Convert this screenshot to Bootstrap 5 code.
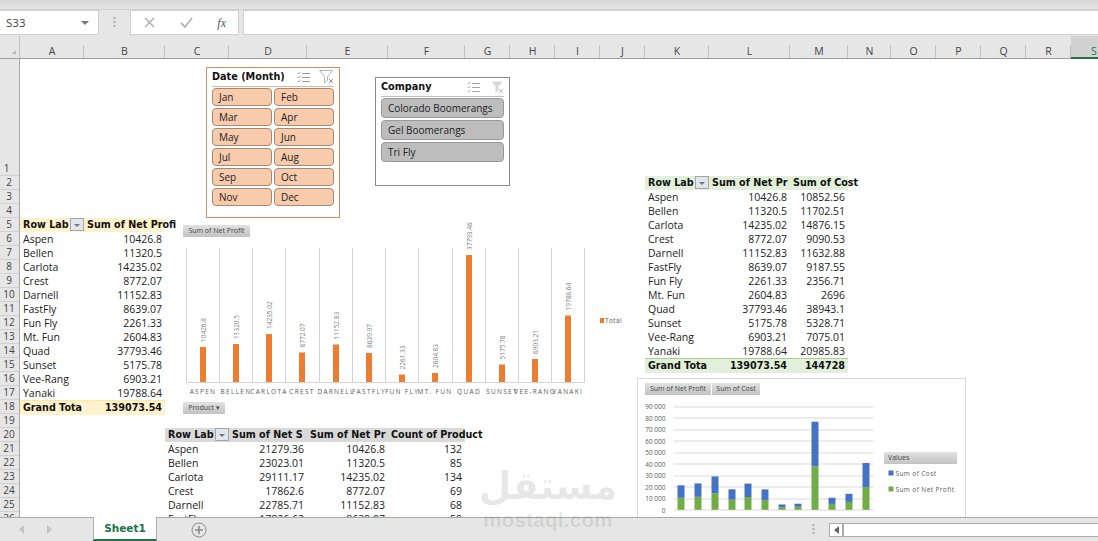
<!DOCTYPE html>
<html lang="en">
<head>
<meta charset="utf-8">
<title>Sheet1</title>
<link href="https://cdn.jsdelivr.net/npm/bootstrap@5.3.0/dist/css/bootstrap.min.css" rel="stylesheet">
<style>
html,body{height:541px;overflow:hidden;background:#fff;color:#222;font-family:"Open Sans","Liberation Sans",sans-serif;font-size:10.5px}
.xl-app{width:1098px;height:541px;position:relative;overflow:hidden}
.xl-ribbon{height:10px;background:linear-gradient(#d6d6d6,#e6e6e6);border-bottom:1px solid #cfcfcf}
.xl-fbar{height:26px;background:#e6e6e6;padding:0 0 1px}
.xl-namebox{width:99px;background:#fff;border:1px solid #d0d0d0;border-left:0;font-size:11.5px;color:#444;padding:0 6px;height:25px}
.xl-caret{width:0;height:0;border:4px solid transparent;border-top:4px solid #777;border-bottom:0}
.xl-dots{width:31px;color:#aaa;font-size:0}
.xl-fbtns{width:109px;height:25px;background:#fff;border:1px solid #d0d0d0;padding:0 12px 0 13px}
.xl-fx{font-family:"Liberation Serif",serif;font-style:italic;font-size:12px;color:#555}
.xl-input{flex:1;height:25px;margin-left:4px;background:#fff;border:1px solid #d0d0d0;border-right:0}
.xl-cols{height:23px;background:#e6e6e6;border-bottom:1px solid #9e9e9e}
.xl-corner{width:20px;flex:none;position:relative;border-right:1px solid #c4c4c4}
.xl-corner::after{content:"";position:absolute;right:3px;bottom:4px;border:2px solid transparent;border-right-color:#b5b5b5;border-bottom-color:#b5b5b5}
.xl-col{flex:none;text-align:center;font-size:10.5px;line-height:14px;color:#444;padding-top:8px;position:relative}
.xl-col::after{content:"";position:absolute;right:0;bottom:0;height:13px;border-right:1px solid #c0c0c0}
.xl-col.on{background:#d2d2d2;color:#217346;border-bottom:2px solid #217346;margin-bottom:-1px;height:23px}
.w64{width:64px}.w81{width:81px}.w78{width:78px}.w77{width:77px}.w45{width:45px}.w58{width:58px}.w43{width:43px}.w46{width:46px}
.xl-body{height:458px;overflow:hidden}
.xl-rows{width:20px;flex:none;background:#e6e6e6;border-right:1px solid #a8a8a8}
.xl-rows div{height:14px;line-height:13px;text-align:center;font-size:10px;color:#444;border-bottom:1px solid #d0d0d0;padding-right:1px}
.xl-rows .r1{height:117px;line-height:13px;display:flex;align-items:flex-end;justify-content:center;padding-right:6px}
.xl-sheet{position:relative;flex:1;display:grid;grid-template-columns:64px 81px 64px 78px 81px 77px 45px 45px 45px 45px 64px 81px 58px;grid-template-rows:117px repeat(25,14px);align-content:start;justify-content:start}
.pv-a{grid-area:5/1/19/3}.pv-b{grid-area:2/11/16/14}.pv-c{grid-area:20/3/27/7}
.pv-tbl{table-layout:fixed;width:100%;--bs-table-bg:transparent;font-size:10.5px;color:#222}
.pv-tbl td,.pv-tbl th{padding:0 3px;height:14px;line-height:14px;white-space:nowrap;vertical-align:middle;overflow:hidden}
.pv-tbl th{font-family:"DejaVu Sans",sans-serif;font-size:9.6px;font-weight:700;color:#111;text-align:center}
.pv-tbl th.lft{text-align:left;padding-right:0}
.pv-tbl th.over{overflow:visible;text-align:left;padding-left:3px}
.pv-tbl td+td{text-align:right}
.pv-tbl th.num{text-align:right}
.hd-cream{background:#fff2cc}.hd-green{background:#e2efda}.hd-grey{background:#d9d9d9}
.tot-cream{background:#fff2cc;border-top:1px solid #ffe699}
.tot-green{background:#e2efda;border-top:1px solid #a9d08e}
.pv-flt{float:right;width:14px;height:13px;background:#e0e5ee;border:1px solid #a6a6a6;position:relative;margin-top:0}
.pv-flt::after{content:"";position:absolute;left:3px;top:5px;border:3px solid transparent;border-top-color:#777;border-bottom:0}
.sl-box{position:absolute;background:#fff;padding:0 5px}
.sl-date{left:186px;top:8px;width:134px;height:151px;border:1px solid #c8935f}
.sl-comp{left:355px;top:18px;width:135px;height:109px;border:1px solid #8a8a8a}
.sl-head{height:19px;font-family:"DejaVu Sans",sans-serif;font-weight:700;font-size:9.7px;color:#111}
.sl-date .sl-head{border-bottom:1px solid #e2b68d}
.sl-comp .sl-head{border-bottom:1px solid #bdbdbd}
.sl-icons{display:flex;align-items:center;gap:9px}
.sl-comp .sl-icons{gap:11px}
.sl-grid{display:grid;gap:2px;margin-top:1px}
.sl-date .sl-grid{grid-template-columns:60px 60px;margin-top:1px}
.sl-btn{--bs-btn-padding-x:6px;--bs-btn-padding-y:0;--bs-btn-border-radius:4px;text-align:left;font-size:10px;color:#222;line-height:16px;height:18px;border:1px solid #a58a72;background:#f8cbad;white-space:nowrap}
.sl-comp .sl-btn{height:20px;line-height:18px;background:#bdbdbd;border-color:#999}
.ch-one{position:absolute;left:160px;top:161px;width:450px;height:200px}
.ch-two{position:absolute;left:617px;top:319px;width:329px;height:145px;background:#fff;border:1px solid #d9d9d9}
.ch-one svg,.ch-two svg{display:block;position:absolute;left:0;top:0}
.ch-tag{position:absolute;height:12px;line-height:12px;padding:0 3px;font-size:7px;color:#444;background:linear-gradient(#e2e2e2,#c2c2c2);white-space:nowrap;border:0;border-radius:0}
.ch-label{font-family:"Open Sans",sans-serif;fill:#7f7f7f;font-size:6.5px}
.ch-cat{font-family:"Open Sans",sans-serif;fill:#595959;font-size:6.5px;letter-spacing:1.3px;text-anchor:middle}
.ch-leg{font-family:"Open Sans",sans-serif;fill:#595959;font-size:6.5px;letter-spacing:.4px}
.ch-axis{font-family:"Open Sans",sans-serif;fill:#595959;font-size:6.5px;text-anchor:end}
.tag-a{left:3px;top:5px;width:67px}
.tag-b{left:3px;top:182px;width:42px}
.tag-c{left:7px;top:4px;width:66px}
.tag-d{left:74px;top:4px;width:48px}
.tag-e{left:246px;top:73px;width:73px;padding-left:4px;text-align:left}
.xl-foot{height:24px;background:#e6e6e6;border-top:1px solid #a8a8a8;position:relative}
.xl-nav{width:93px;padding-left:19px;gap:21px}
.xl-tab{width:64px;background:#fff;color:#217346;font-family:"DejaVu Sans",sans-serif;font-weight:700;font-size:10.5px;text-align:center;line-height:22px;border-left:1px solid #b0b0b0;border-right:1px solid #b0b0b0;border-bottom:2px solid #217346;margin-top:-1px;height:24px}
.xl-add{margin-left:34px}
.xl-split{margin-left:auto;width:17px}
.xl-scroll{width:269px;height:14px;background:#fff;border:1px solid #ababab;border-right:0;margin-top:0}
.xl-sbtn{width:14px;border-right:2px solid #ababab;height:100%}
.wm{position:absolute;left:478px;top:461px;width:140px;color:rgba(0,0,0,.09);text-align:center;pointer-events:none}
.wm-ar{font-family:"DejaVu Sans",sans-serif;font-weight:700;font-size:38px;line-height:50px;height:50px}
.wm-en{font-family:"Liberation Sans",sans-serif;font-weight:700;font-size:20.5px;line-height:17px;letter-spacing:.3px}
</style>
</head>
<body>
<div class="xl-app">
  <div class="xl-ribbon"></div>
  <div class="xl-fbar d-flex">
    <div class="xl-namebox d-flex align-items-center justify-content-between"><span>S33</span><span class="xl-caret me-1"></span></div>
    <div class="xl-dots d-flex align-items-center justify-content-center">
      <svg width="3" height="11" viewBox="0 0 3 11"><rect x="0.5" y="0" width="2" height="2" fill="#b0b0b0"/><rect x="0.5" y="4" width="2" height="2" fill="#b0b0b0"/><rect x="0.5" y="8" width="2" height="2" fill="#b0b0b0"/></svg>
    </div>
    <div class="xl-fbtns d-flex align-items-center justify-content-between">
      <svg width="11" height="11" viewBox="0 0 11 11"><path d="M1 1l9 9M10 1l-9 9" stroke="#b4b4b4" stroke-width="1.6" fill="none"/></svg>
      <svg width="13" height="11" viewBox="0 0 13 11"><path d="M1 6l4 4 7-9" stroke="#b4b4b4" stroke-width="1.8" fill="none"/></svg>
      <span class="xl-fx">fx</span>
    </div>
    <div class="xl-input"></div>
  </div>
  <div class="xl-cols d-flex">
    <div class="xl-corner"></div>
    <div class="xl-col w64">A</div><div class="xl-col w81">B</div><div class="xl-col w64">C</div><div class="xl-col w78">D</div><div class="xl-col w81">E</div><div class="xl-col w77">F</div><div class="xl-col w45">G</div><div class="xl-col w45">H</div><div class="xl-col w45">I</div><div class="xl-col w45">J</div><div class="xl-col w64">K</div><div class="xl-col w81">L</div><div class="xl-col w58">M</div><div class="xl-col w43">N</div><div class="xl-col w45">O</div><div class="xl-col w45">P</div><div class="xl-col w45">Q</div><div class="xl-col w45">R</div><div class="xl-col w46 on">S</div>
  </div>
  <div class="xl-body d-flex">
    <div class="xl-rows">
      <div class="r1">1</div><div>2</div><div>3</div><div>4</div><div>5</div><div>6</div><div>7</div><div>8</div><div>9</div><div>10</div><div>11</div><div>12</div><div>13</div><div>14</div><div>15</div><div>16</div><div>17</div><div>18</div><div>19</div><div>20</div><div>21</div><div>22</div><div>23</div><div>24</div><div>25</div><div>26</div>
    </div>
    <div class="xl-sheet">

      <div class="pv-a">
        <table class="table table-borderless mb-0 pv-tbl">
          <colgroup><col class="w64"><col class="w81"></colgroup>
          <tr class="hd-cream"><th class="lft"><span class="pv-flt"></span>Row Lab</th><th class="over">Sum of Net Profi</th></tr>
          <tr><td>Aspen</td><td>10426.8</td></tr>
          <tr><td>Bellen</td><td>11320.5</td></tr>
          <tr><td>Carlota</td><td>14235.02</td></tr>
          <tr><td>Crest</td><td>8772.07</td></tr>
          <tr><td>Darnell</td><td>11152.83</td></tr>
          <tr><td>FastFly</td><td>8639.07</td></tr>
          <tr><td>Fun Fly</td><td>2261.33</td></tr>
          <tr><td>Mt. Fun</td><td>2604.83</td></tr>
          <tr><td>Quad</td><td>37793.46</td></tr>
          <tr><td>Sunset</td><td>5175.78</td></tr>
          <tr><td>Vee-Rang</td><td>6903.21</td></tr>
          <tr><td>Yanaki</td><td>19788.64</td></tr>
          <tr class="tot-cream"><th class="lft">Grand Tota</th><th class="num">139073.54</th></tr>
        </table>
      </div>

      <div class="pv-b">
        <table class="table table-borderless mb-0 pv-tbl">
          <colgroup><col class="w64"><col class="w81"><col class="w58"></colgroup>
          <tr class="hd-green"><th class="lft"><span class="pv-flt"></span>Row Lab</th><th class="lft">Sum of Net Pr</th><th class="over">Sum of Cost</th></tr>
          <tr><td>Aspen</td><td>10426.8</td><td>10852.56</td></tr>
          <tr><td>Bellen</td><td>11320.5</td><td>11702.51</td></tr>
          <tr><td>Carlota</td><td>14235.02</td><td>14876.15</td></tr>
          <tr><td>Crest</td><td>8772.07</td><td>9090.53</td></tr>
          <tr><td>Darnell</td><td>11152.83</td><td>11632.88</td></tr>
          <tr><td>FastFly</td><td>8639.07</td><td>9187.55</td></tr>
          <tr><td>Fun Fly</td><td>2261.33</td><td>2356.71</td></tr>
          <tr><td>Mt. Fun</td><td>2604.83</td><td>2696</td></tr>
          <tr><td>Quad</td><td>37793.46</td><td>38943.1</td></tr>
          <tr><td>Sunset</td><td>5175.78</td><td>5328.71</td></tr>
          <tr><td>Vee-Rang</td><td>6903.21</td><td>7075.01</td></tr>
          <tr><td>Yanaki</td><td>19788.64</td><td>20985.83</td></tr>
          <tr class="tot-green"><th class="lft">Grand Tota</th><th class="num">139073.54</th><th class="num">144728</th></tr>
        </table>
      </div>

      <div class="pv-c">
        <table class="table table-borderless mb-0 pv-tbl">
          <colgroup><col class="w64"><col class="w78"><col class="w81"><col class="w77"></colgroup>
          <tr class="hd-grey"><th class="lft"><span class="pv-flt"></span>Row Lab</th><th class="lft">Sum of Net S</th><th class="lft">Sum of Net Pr</th><th class="over">Count of Product</th></tr>
          <tr><td>Aspen</td><td>21279.36</td><td>10426.8</td><td>132</td></tr>
          <tr><td>Bellen</td><td>23023.01</td><td>11320.5</td><td>85</td></tr>
          <tr><td>Carlota</td><td>29111.17</td><td>14235.02</td><td>134</td></tr>
          <tr><td>Crest</td><td>17862.6</td><td>8772.07</td><td>69</td></tr>
          <tr><td>Darnell</td><td>22785.71</td><td>11152.83</td><td>68</td></tr>
          <tr><td>FastFly</td><td>17826.62</td><td>8639.07</td><td>59</td></tr>
        </table>
      </div>

      <div class="sl-box sl-date">
        <div class="sl-head d-flex align-items-center justify-content-between">
          <span>Date (Month)</span>
          <span class="sl-icons">
            <svg width="13" height="13" viewBox="0 0 13 13" fill="none" stroke="#9a9a9a"><path d="M5 2.5h8M5 6.5h8M5 10.5h8"/><path d="M0.5 2l1 1 2-2M0.5 6l1 1 2-2M0.5 10l1 1 2-2"/></svg>
            <svg width="15" height="14" viewBox="0 0 15 14" fill="none" stroke="#b5b5b5"><path d="M0.5 0.5h13l-5 6v4l-3 2v-6z"/><path d="M10 9l4 4M14 9l-4 4" stroke="#999"/></svg>
          </span>
        </div>
        <div class="sl-grid">
          <button class="btn sl-btn">Jan</button><button class="btn sl-btn">Feb</button>
          <button class="btn sl-btn">Mar</button><button class="btn sl-btn">Apr</button>
          <button class="btn sl-btn">May</button><button class="btn sl-btn">Jun</button>
          <button class="btn sl-btn">Jul</button><button class="btn sl-btn">Aug</button>
          <button class="btn sl-btn">Sep</button><button class="btn sl-btn">Oct</button>
          <button class="btn sl-btn">Nov</button><button class="btn sl-btn">Dec</button>
        </div>
      </div>

      <div class="sl-box sl-comp">
        <div class="sl-head d-flex align-items-center justify-content-between">
          <span>Company</span>
          <span class="sl-icons">
            <svg width="13" height="13" viewBox="0 0 13 13" fill="none" stroke="#a8a8a8"><path d="M5 2.5h8M5 6.5h8M5 10.5h8"/><path d="M0.5 2l1 1 2-2M0.5 6l1 1 2-2M0.5 10l1 1 2-2"/></svg>
            <svg width="13" height="13" viewBox="0 0 13 13"><path d="M0.5 0.5h11l-4 5v4l-3 2v-6z" fill="#d8d8d8"/><path d="M8 8l4 4M12 8l-4 4" stroke="#bbb" fill="none"/></svg>
          </span>
        </div>
        <div class="sl-grid">
          <button class="btn sl-btn">Colorado Boomerangs</button>
          <button class="btn sl-btn">Gel Boomerangs</button>
          <button class="btn sl-btn">Tri Fly</button>
        </div>
      </div>

      <div class="ch-one">
        <svg width="450" height="200" viewBox="180 220 450 200">
          <g stroke="#d4d4d4" stroke-width="1">
            <path d="M186.5 248V382M219.5 248V382M252.5 248V382M285.5 248V382M319.5 248V382M352.5 248V382M385.5 248V382M418.5 248V382M452.5 248V382M485.5 248V382M518.5 248V382M551.5 248V382M584.5 248V382M186 382.5H585"/>
          </g>
          <g fill="#ed7d31">
            <rect x="200" y="347" width="6" height="35"/><rect x="233" y="344" width="6" height="38"/><rect x="266" y="334" width="6" height="48"/><rect x="299" y="352.5" width="6" height="29.5"/><rect x="333" y="344.5" width="6" height="37.5"/><rect x="366" y="353" width="6" height="29"/><rect x="399" y="374.5" width="6" height="7.5"/><rect x="432" y="373" width="6" height="9"/><rect x="466" y="255" width="6" height="127"/><rect x="499" y="364.5" width="6" height="17.5"/><rect x="532" y="359" width="6" height="23"/><rect x="565" y="315.5" width="6" height="66.5"/>
            <rect x="600" y="318" width="4" height="5"/>
          </g>
          <g class="ch-label">
            <text transform="translate(205.5 342) rotate(-90)">10426.8</text>
            <text transform="translate(238.5 339) rotate(-90)">11320.5</text>
            <text transform="translate(271.5 329) rotate(-90)">14235.02</text>
            <text transform="translate(304.5 347.5) rotate(-90)">8772.07</text>
            <text transform="translate(338.5 339.5) rotate(-90)">11152.83</text>
            <text transform="translate(371.5 348) rotate(-90)">8639.07</text>
            <text transform="translate(404.5 369.5) rotate(-90)">2261.33</text>
            <text transform="translate(437.5 368) rotate(-90)">2604.83</text>
            <text transform="translate(471.5 250) rotate(-90)">37793.46</text>
            <text transform="translate(504.5 359.5) rotate(-90)">5175.78</text>
            <text transform="translate(537.5 354) rotate(-90)">6903.21</text>
            <text transform="translate(570.5 310.5) rotate(-90)">19788.64</text>
          </g>
          <g class="ch-cat">
            <text x="203" y="394">ASPEN</text><text x="236" y="394">BELLEN</text><text x="269" y="394">CARLOTA</text><text x="302" y="394">CREST</text><text x="336" y="394">DARNELL</text><text x="369" y="394">FASTFLY</text><text x="402" y="394">FUN FLY</text><text x="435" y="394">MT. FUN</text><text x="469" y="394">QUAD</text><text x="502" y="394">SUNSET</text><text x="535" y="394">VEE-RANG</text><text x="568" y="394">YANAKI</text>
          </g>
          <text class="ch-leg" x="605" y="323">Total</text>
        </svg>
        <button class="btn ch-tag tag-a">Sum of Net Profit</button>
        <button class="btn ch-tag tag-b">Product ▾</button>
      </div>

      <div class="ch-two">
        <svg width="329" height="145" viewBox="637.5 378.5 329 145">
          <g stroke="#d9d9d9">
            <path d="M673 406.5H873M673 417.5H873M673 429.5H873M673 440.5H873M673 452.5H873M673 463.5H873M673 475.5H873M673 486.5H873M673 498.5H873M673 509.5H873"/>
          </g>
          <g fill="#70ad47">
            <rect x="677" y="497.3" width="7" height="12"/><rect x="694" y="496.3" width="7" height="13"/><rect x="711" y="493" width="7" height="16.3"/><rect x="728" y="499.2" width="7" height="10.1"/><rect x="744" y="496.5" width="7" height="12.8"/><rect x="761" y="499.4" width="7" height="9.9"/><rect x="778" y="506.7" width="7" height="2.6"/><rect x="794" y="506.3" width="7" height="3"/><rect x="811" y="465.9" width="7" height="43.4"/><rect x="828" y="503.4" width="7" height="5.9"/><rect x="845" y="501.4" width="7" height="7.9"/><rect x="862" y="486.6" width="7" height="22.7"/>
            <rect x="888" y="486" width="5" height="5"/>
          </g>
          <g fill="#4472c4">
            <rect x="677" y="484.8" width="7" height="12.5"/><rect x="694" y="482.9" width="7" height="13.4"/><rect x="711" y="475.9" width="7" height="17.1"/><rect x="728" y="488.8" width="7" height="10.4"/><rect x="744" y="483.1" width="7" height="13.4"/><rect x="761" y="488.9" width="7" height="10.5"/><rect x="778" y="504" width="7" height="2.7"/><rect x="794" y="503.2" width="7" height="3.1"/><rect x="811" y="421.2" width="7" height="44.7"/><rect x="828" y="497.3" width="7" height="6.1"/><rect x="845" y="493.3" width="7" height="8.1"/><rect x="862" y="462.5" width="7" height="24.1"/>
            <rect x="888" y="470" width="5" height="5"/>
          </g>
          <g class="ch-axis">
            <text x="665" y="408.5">90 000</text><text x="665" y="420">80 000</text><text x="665" y="431.5">70 000</text><text x="665" y="443">60 000</text><text x="665" y="454.5">50 000</text><text x="665" y="466">40 000</text><text x="665" y="477.5">30 000</text><text x="665" y="489">20 000</text><text x="665" y="500.5">10 000</text><text x="665" y="512">0</text>
          </g>
          <text class="ch-leg" x="895" y="475">Sum of Cost</text>
          <text class="ch-leg" x="895" y="491">Sum of Net Profit</text>
        </svg>
        <button class="btn ch-tag tag-c">Sum of Net Profit</button>
        <button class="btn ch-tag tag-d">Sum of Cost</button>
        <button class="btn ch-tag tag-e">Values</button>
      </div>
    </div>
  </div>
  <div class="xl-foot d-flex align-items-center">
    <div class="xl-nav d-flex align-items-center">
      <svg width="6" height="9" viewBox="0 0 6 9"><path d="M5 0v9L0 4.5z" fill="#c4c4c4"/></svg>
      <svg width="6" height="9" viewBox="0 0 6 9"><path d="M1 0v9l5-4.5z" fill="#c4c4c4"/></svg>
    </div>
    <div class="xl-tab">Sheet1</div>
    <svg class="xl-add" width="16" height="16" viewBox="0 0 16 16" fill="none" stroke="#8a8a8a"><circle cx="8" cy="8" r="7"/><path d="M8 4v8M4 8h8" stroke-width="1.6"/></svg>
    <div class="xl-split d-flex justify-content-start">
      <svg width="3" height="11" viewBox="0 0 3 11"><rect x="0.5" y="0" width="2" height="2" fill="#b0b0b0"/><rect x="0.5" y="4" width="2" height="2" fill="#b0b0b0"/><rect x="0.5" y="8" width="2" height="2" fill="#b0b0b0"/></svg>
    </div>
    <div class="xl-scroll d-flex">
      <div class="xl-sbtn d-flex align-items-center justify-content-center"><svg width="5" height="8" viewBox="0 0 5 8"><path d="M5 0v8L0 4z" fill="#666"/></svg></div>
    </div>
  </div>
  <div class="wm"><div class="wm-ar">مستقل</div><div class="wm-en">mostaql.com</div></div>
</div>
<script src="https://cdn.jsdelivr.net/npm/bootstrap@5.3.0/dist/js/bootstrap.bundle.min.js"></script>
</body>
</html>
